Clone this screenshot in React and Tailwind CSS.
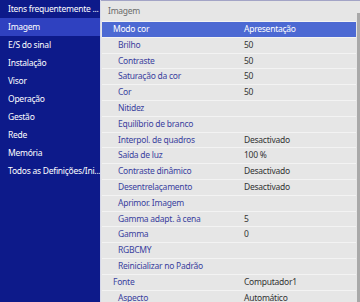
const MENU = [
  'Itens frequentemente ...',
  'Imagem',
  'E/S do sinal',
  'Instalação',
  'Visor',
  'Operação',
  'Gestão',
  'Rede',
  'Memória',
  'Todos as Definições/Ini...',
]

const ROWS = [
  { label: 'Modo cor', value: 'Apresentação', level: 1, active: true },
  { label: 'Brilho', value: '50', level: 2 },
  { label: 'Contraste', value: '50', level: 2 },
  { label: 'Saturação da cor', value: '50', level: 2 },
  { label: 'Cor', value: '50', level: 2 },
  { label: 'Nitidez', value: '', level: 2 },
  { label: 'Equilíbrio de branco', value: '', level: 2 },
  { label: 'Interpol. de quadros', value: 'Desactivado', level: 2 },
  { label: 'Saída de luz', value: '100 %', level: 2 },
  { label: 'Contraste dinâmico', value: 'Desactivado', level: 2 },
  { label: 'Desentrelaçamento', value: 'Desactivado', level: 2 },
  { label: 'Aprimor. Imagem', value: '', level: 2 },
  { label: 'Gamma adapt. à cena', value: '5', level: 2 },
  { label: 'Gamma', value: '0', level: 2 },
  { label: 'RGBCMY', value: '', level: 2 },
  { label: 'Reinicializar no Padrão', value: '', level: 2 },
  { label: 'Fonte', value: 'Computador1', level: 1 },
  { label: 'Aspecto', value: 'Automático', level: 2 },
]

export default function App() {
  return (
    <div
      className="w-[360px] h-[302px] flex overflow-hidden bg-[#e6e6e6] text-[8.5px] tracking-[-0.25px]"
      style={{ fontFamily: '"Noto Sans", "Open Sans", sans-serif' }}
    >
      {/* Left menu */}
      <div className="w-[101px] shrink-0 bg-[#0d1a8a] border-r border-[#d6d8ea] flex flex-col">
        {MENU.map((m, i) => (
          <div
            key={m}
            className={`h-[18px] flex items-center pl-2 whitespace-nowrap overflow-hidden text-white
              ${i === 1 ? 'bg-[#2f41c0]' : ''}`}
          >
            {m}
          </div>
        ))}
      </div>

      {/* Right list */}
      <div className="flex-1 flex border-t border-[#a3a4c6]">
        <div className="flex-1 flex flex-col pl-[1px]">
          <div className="h-[21px] shrink-0 flex items-center pl-[6px] text-[#6a6a6a] border-b border-[#f3f3f3]">
            Imagem
          </div>
          {ROWS.map(r => (
            <div
              key={r.label}
              className="h-[15.8px] shrink-0 flex border-b border-[#f3f3f3]"
            >
              <div
                className={`flex-1 flex items-center ${r.active ? 'bg-[#4c69d3] text-white' : ''}`}
              >
                <span
                  className={`w-[142px] shrink-0 whitespace-nowrap ${r.active ? 'text-white' : 'text-[#3a3f9e]'}
                    ${r.level === 1 ? 'pl-[11px]' : 'pl-[16px]'}`}
                >
                  {r.label}
                </span>
                <span className={r.active ? 'text-white' : 'text-[#333333]'}>{r.value}</span>
              </div>
            </div>
          ))}
        </div>
        {/* Scrollbar */}
        <div className="w-[4px] shrink-0 flex flex-col pl-[1px]">
          <div className="h-[12px]" />
          <div className="flex-1 bg-[#a9a9a9]" />
        </div>
      </div>
    </div>
  )
}
